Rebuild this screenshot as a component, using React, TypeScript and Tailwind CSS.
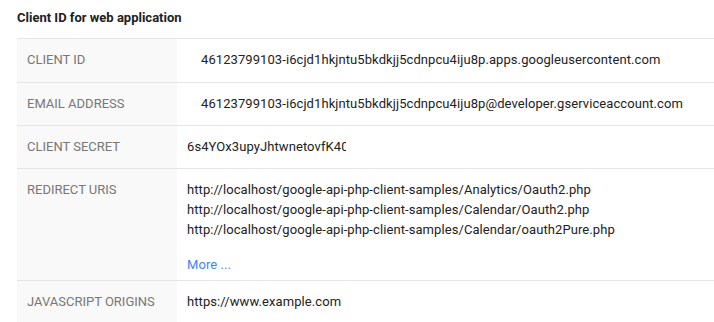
const rows: { label: string; values: string[]; indent?: boolean; more?: boolean; clip?: boolean }[] = [
  {
    label: 'Client ID',
    values: ['46123799103-i6cjd1hkjntu5bkdkjj5cdnpcu4iju8p.apps.googleusercontent.com'],
    indent: true,
  },
  {
    label: 'Email address',
    values: ['46123799103-i6cjd1hkjntu5bkdkjj5cdnpcu4iju8p@developer.gserviceaccount.com'],
    indent: true,
  },
  { label: 'Client secret', values: ['6s4YOx3upyJhtwnetovfK40'], clip: true },
  {
    label: 'Redirect URIs',
    values: [
      'http://localhost/google-api-php-client-samples/Analytics/Oauth2.php',
      'http://localhost/google-api-php-client-samples/Calendar/Oauth2.php',
      'http://localhost/google-api-php-client-samples/Calendar/oauth2Pure.php',
    ],
    more: true,
  },
  { label: 'Javascript origins', values: ['https://www.example.com'] },
];

export default function App() {
  return (
    <div className="min-h-screen bg-white font-['Roboto',sans-serif] text-[13px] text-[#222]">
      {/* Title */}
      <div className="px-[17px] pt-[9px] pb-[11px]">
        <h2 className="font-bold leading-[18px] text-[#212121]">Client ID for web application</h2>
      </div>

      {/* Details table */}
      <div className="ml-[17px]">
        {rows.map((row, i) => (
          <div key={row.label} className="flex border-t border-[#e5e5e5]">
            <div className={`w-[160px] shrink-0 bg-[#f9f9f9] px-[10px] ${i === 0 ? 'pt-[11px] pb-[12px]' : 'py-[11px]'} text-[13px] leading-5 uppercase text-[#777]`}>
              {row.label}
            </div>
            <div className={`flex-1 min-w-0 pt-[11px] ${row.more ? 'pb-[5px]' : 'pb-[11px]'} pr-2 leading-5 tracking-[0.08px] ${row.indent ? 'pl-[24px]' : 'pl-[10px]'}`}>
              {row.values.map((v) => (
                <div key={v} className={`whitespace-nowrap overflow-hidden ${row.clip ? 'w-[159px]' : ''}`}>
                  {v}
                </div>
              ))}
              {row.more && (
                <a href="#" className="mt-[15px] block text-[#4285f4]">
                  More ...
                </a>
              )}
            </div>
          </div>
        ))}
      </div>
    </div>
  );
}
